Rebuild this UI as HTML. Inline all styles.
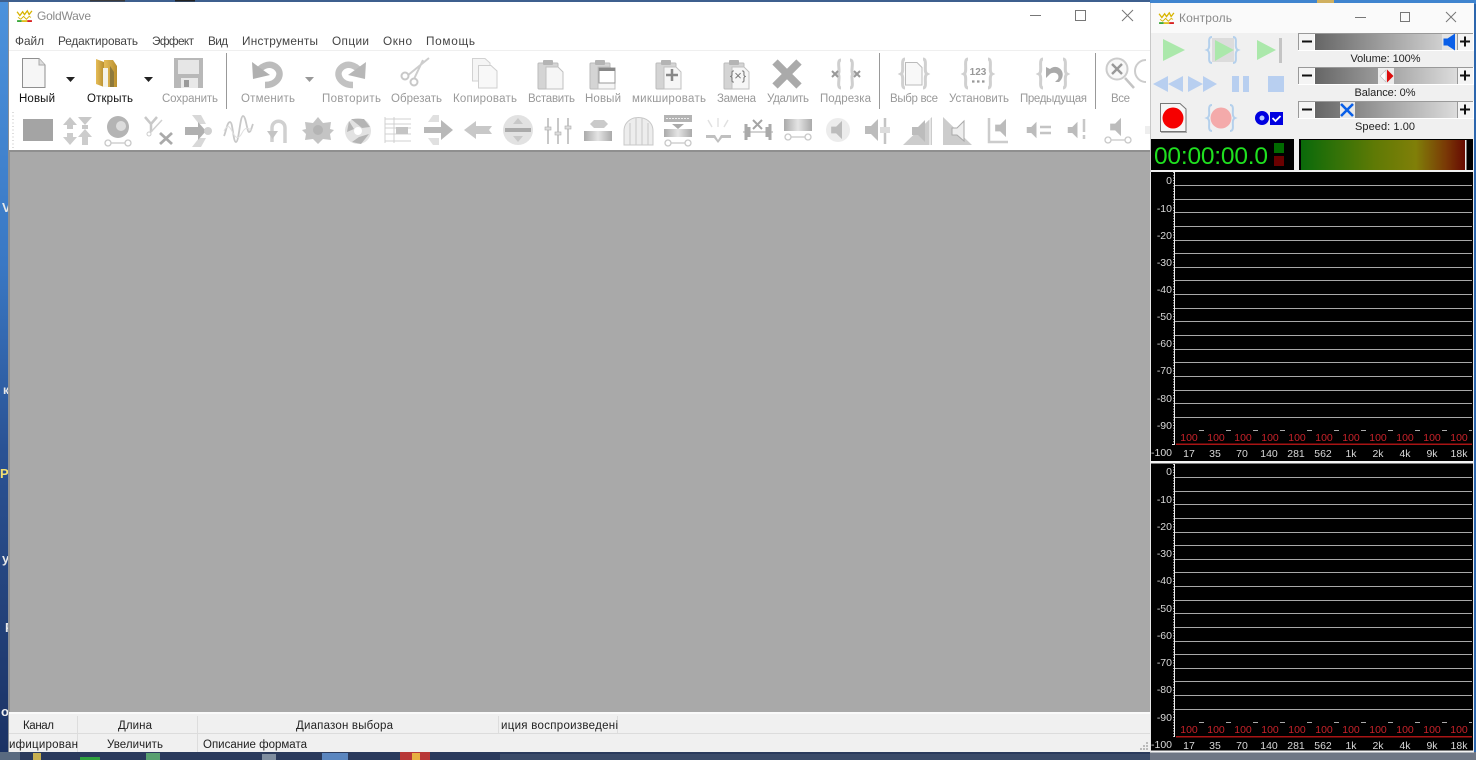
<!DOCTYPE html>
<html><head><meta charset="utf-8"><title>GoldWave</title>
<style>
html,body{margin:0;padding:0;background:#24375f;overflow:hidden}
svg{display:block;position:absolute;left:0;top:0}
text{font-family:"Liberation Sans",sans-serif;font-size:11px}
.m{fill:#444;font-size:11.8px}
.l{fill:#999;font-size:11.5px}
.b{fill:#111;font-size:11.5px}
.s{fill:#222;font-size:11.5px}
.a{fill:#d8d8d8;font-size:10.5px;text-anchor:end}
.f{fill:#d8d8d8;font-size:10.5px;text-anchor:middle}
.r{fill:#c8222a;font-size:10.5px;text-anchor:middle}
.c{fill:#222;font-size:10.5px;text-anchor:middle}
</style></head><body>
<svg width="1476" height="760" viewBox="0 0 1476 760" xmlns="http://www.w3.org/2000/svg">
<defs>
<linearGradient id="dk" x1="0" y1="0" x2="0" y2="1"><stop offset="0" stop-color="#4c92dc"/><stop offset=".35" stop-color="#3a78c4"/><stop offset=".6" stop-color="#2a5294"/><stop offset=".8" stop-color="#24437c"/><stop offset="1" stop-color="#1b3264"/></linearGradient>
<linearGradient id="tr" x1="0" y1="0" x2="1" y2="0"><stop offset="0" stop-color="#666"/><stop offset="1" stop-color="#dcdcdc"/></linearGradient>
<linearGradient id="lv" x1="0" y1="0" x2="1" y2="0"><stop offset="0" stop-color="#0a6a0a"/><stop offset=".45" stop-color="#5f7a05"/><stop offset=".7" stop-color="#807f08"/><stop offset=".88" stop-color="#7a3a06"/><stop offset="1" stop-color="#660a02"/></linearGradient>
<linearGradient id="bar" x1="0" y1="0" x2="1" y2="0"><stop offset="0" stop-color="#aaa"/><stop offset=".5" stop-color="#e4e4e4"/><stop offset="1" stop-color="#aaa"/></linearGradient>
<linearGradient id="fold" x1="0" y1="0" x2="1" y2="0"><stop offset="0" stop-color="#e6bd58"/><stop offset="1" stop-color="#b98f2e"/></linearGradient>
<symbol id="lg" viewBox="0 0 18 14" overflow="visible"><path d="M1 3 L4 7 L7 3 L9 6 L12 2 L14 6 L17 2" fill="none" stroke="#d8b400" stroke-width="1.4"/><path d="M2 9 L5 11 L8 8 L11 11 L14 8 L16 9" fill="none" stroke="#d8b400" stroke-width="1"/><rect x="1" y="12" width="5" height="2" fill="#3aa83a"/><rect x="6" y="12" width="6" height="2" fill="#e0c020"/><rect x="12" y="12" width="5" height="2" fill="#d82020"/></symbol>
<symbol id="clip" viewBox="-15 -16 30 32" overflow="visible"><rect x="-13" y="-11" width="20" height="26" rx="1" fill="#d4d4d4" stroke="#bbb"/><rect x="-8" y="-14" width="10" height="5" rx="1" fill="#b4b4b4"/><path d="M-5 -7 H7 L12 -2 V15 H-5Z" fill="#f6f6f6" stroke="#c0c0c0"/></symbol>
<symbol id="spk" viewBox="-8 -12 16 24" overflow="visible"><path d="M-7 -4 H-1 L6 -11 V11 L-1 4 H-7Z" fill="#bcbcbc"/></symbol>
<symbol id="wr" viewBox="-14 -4 28 8" overflow="visible"><circle cx="-10" cy="0" r="3" fill="#fff" stroke="#c8c8c8" stroke-width="1.3"/><circle cx="10" cy="0" r="3" fill="#fff" stroke="#c8c8c8" stroke-width="1.3"/><path d="M-7 0H7" stroke="#c8c8c8" stroke-width="1.3"/></symbol>
</defs>

<!-- desktop -->
<rect width="1476" height="760" fill="#24375f"/>
<rect x="0" y="0" width="9" height="752" fill="url(#dk)"/>
<rect x="0" y="0" width="1476" height="2" fill="#3d5f8e"/>
<rect x="90" y="0" width="35" height="1.5" fill="#3a3a3a"/><rect x="175" y="0" width="20" height="1.5" fill="#222"/>
<rect x="1473" y="0" width="3" height="752" fill="#2c66ad"/>
<rect x="1150" y="0" width="326" height="4" fill="#3f84cf"/>
<rect x="1317" y="0" width="17" height="3" fill="#d0b060"/>
<rect x="0" y="752" width="1476" height="8" fill="#2a3a5c"/>
<rect x="0" y="752" width="20" height="8" fill="#596a80"/>
<rect x="33" y="753" width="8" height="7" fill="#c8b050"/>
<rect x="80" y="757" width="20" height="3" fill="#2fa03f"/>
<rect x="146" y="753" width="14" height="7" fill="#58a070"/>
<rect x="262" y="754" width="14" height="6" fill="#7f8ea0"/>
<rect x="322" y="753" width="26" height="7" fill="#5a86c0"/>
<rect x="400" y="752" width="30" height="8" fill="#b83838"/><rect x="412" y="753" width="8" height="7" fill="#e8b040"/>
<rect x="500" y="754" width="650" height="6" fill="#3a4a68"/>
<rect x="1150" y="752" width="326" height="8" fill="#6f7785"/>
<text x="2" y="212" fill="#e8e8e8" style="font-size:13px;font-weight:bold">V</text>
<text x="3" y="394" fill="#e8e8e8" style="font-size:12px;font-weight:bold">к</text>
<text x="0" y="478" fill="#f4e070" style="font-size:13px;font-weight:bold">Р</text>
<text x="2" y="563" fill="#e8e8e8" style="font-size:13px;font-weight:bold">у</text>
<text x="5" y="632" fill="#e8e8e8" style="font-size:13px;font-weight:bold">Р</text>
<text x="1" y="716" fill="#f0f0f0" style="font-size:13px;font-weight:bold">о</text>

<!-- main window -->
<rect x="8" y="2" width="1142" height="750" fill="#fff"/>
<rect x="8" y="2" width="1" height="750" fill="#8a8f96"/>
<use href="#lg" x="16" y="9" width="17" height="13"/>
<text x="37" y="20" fill="#8a8a8a" style="font-size:12px" textLength="54">GoldWave</text>
<rect x="1030" y="15" width="11" height="1" fill="#777"/>
<rect x="1075.5" y="10.5" width="10" height="10" fill="none" stroke="#777"/>
<path d="M1122 10 L1133 21 M1133 10 L1122 21" stroke="#777" fill="none"/>

<text class="m" x="15" y="45" textLength="29">Файл</text>
<text class="m" x="58" y="45" textLength="80">Редактировать</text>
<text class="m" x="152" y="45" textLength="42">Эффект</text>
<text class="m" x="208" y="45" textLength="20">Вид</text>
<text class="m" x="242" y="45" textLength="76">Инструменты</text>
<text class="m" x="332" y="45" textLength="37">Опции</text>
<text class="m" x="383" y="45" textLength="29">Окно</text>
<text class="m" x="426" y="45" textLength="49">Помощь</text>
<rect x="9" y="50" width="1141" height="1" fill="#efefef"/>

<!-- separators -->
<rect x="226" y="53" width="1" height="56" fill="#999"/>
<rect x="879" y="53" width="1" height="56" fill="#999"/>
<rect x="1095" y="53" width="1" height="56" fill="#999"/>

<!-- big toolbar icons -->
<path d="M22.5 58.5 H39 L45 65 V87.5 H22.5Z" fill="#f6f6f6" stroke="#8f8f8f"/><path d="M39 58.5V65H45" fill="#ddd" stroke="#aaa"/>
<path d="M66 77h9l-4.500 5z" fill="#222"/>
<path d="M96 59 L104 62 V87 L96 84Z" fill="url(#fold)"/><path d="M104 60 H113 L117 66 V87 H104Z" fill="url(#fold)"/><path d="M103 68 H108 V87 H103Z" fill="#f4f2e8"/><path d="M110 66 L114 72 V87 H110Z" fill="#8f7a3c"/>
<path d="M144 77h9l-4.500 5z" fill="#222"/>
<path d="M174 58 H203 V88 H174Z" fill="#b8b8b8"/><rect x="178" y="60" width="21" height="14" fill="#e6e6e6"/><rect x="181" y="78" width="17" height="10" fill="#e8e8e8"/><rect x="184" y="80" width="5" height="7" fill="#9a9a9a"/>
<path d="M265 85 C278 85 283 74 277 68 C271 62 263 65 258 71" fill="none" stroke="#bcbcbc" stroke-width="6.500"/><path d="M252 62 L253 79 L270 75Z" fill="#b0b0b0"/>
<path d="M305 77h9l-4.500 5z" fill="#999"/>
<g transform="translate(618,0) scale(-1,1)" opacity=".9"><path d="M265 85 C278 85 283 74 277 68 C271 62 263 65 258 71" fill="none" stroke="#bcbcbc" stroke-width="6.500"/><path d="M252 62 L253 79 L270 75Z" fill="#b0b0b0"/></g>
<path d="M429 58 L407 76 M423 60 L414 79" stroke="#cdcdcd" stroke-width="2" fill="none"/><circle cx="405" cy="76" r="3.500" fill="#fff" stroke="#c8c8c8" stroke-width="2"/><circle cx="414" cy="82" r="3.500" fill="#fff" stroke="#c8c8c8" stroke-width="2"/>
<path d="M472.500 58.500H485L490 63V81H472.500Z" fill="#f5f5f5" stroke="#d2d2d2"/><path d="M478.500 65.500H491L497 71V88H478.500Z" fill="#f8f8f8" stroke="#cfcfcf"/>
<use href="#clip" x="536" y="58" width="30" height="32"/>
<use href="#clip" x="588" y="58" width="30" height="32"/><rect x="599" y="68" width="16" height="15" fill="#fff" stroke="#999"/><rect x="599" y="68" width="16" height="3" fill="#888"/>
<use href="#clip" x="654" y="58" width="30" height="32"/><path d="M672 69v12M666 75h12" stroke="#888" stroke-width="2.500"/>
<use href="#clip" x="722" y="58" width="30" height="32"/><text x="738" y="80" fill="#777" style="font-size:13px" text-anchor="middle">{×}</text>
<path d="M775 62 L799 86 M799 62 L775 86" stroke="#aaa" stroke-width="7.500" fill="none"/>
<path d="M841 60 C836 60 841 72 838 74 C841 76 836 88 841 88 M850 60 C855 60 850 72 853 74 C850 76 855 88 850 88" fill="none" stroke="#cfcfcf" stroke-width="3"/><path d="M832 71l6 6m0-6l-6 6M854 71l6 6m0-6l-6 6" stroke="#999" stroke-width="2"/>
<path d="M905 59 C900 59 905 72 901 74 C905 76 900 88 905 88 M923 59 C928 59 923 72 927 74 C923 76 928 88 923 88" fill="none" stroke="#d0d0d0" stroke-width="3"/><path d="M905.500 62.500H917L922 67.500V85H905.500Z" fill="#f8f8f8" stroke="#bbb"/>
<path d="M968 59 C963 59 968 72 964 74 C968 76 963 88 968 88 M988 59 C993 59 988 72 992 74 C988 76 993 88 988 88" fill="none" stroke="#d0d0d0" stroke-width="3"/><text x="978" y="75" fill="#999" text-anchor="middle" style="font-size:10px;font-weight:bold">123</text><path d="M972 81.500h2.500M977 81.500h2.500M982 81.500h2.500" stroke="#999" stroke-width="2.200"/>
<path d="M1043 59 C1038 59 1043 72 1039 74 C1043 76 1038 88 1043 88 M1063 59 C1068 59 1063 72 1067 74 C1063 76 1068 88 1063 88" fill="none" stroke="#d0d0d0" stroke-width="3"/><path d="M1046 67V78L1050 74C1055 71 1060 74 1058 79L1055 82H1059C1064 78 1064 71 1059 68C1056 66 1052 67 1050 69Z" fill="#aaa"/>
<circle cx="1117" cy="69" r="10.500" fill="#f8f8f8" stroke="#ccc" stroke-width="2"/><path d="M1112 64l10 10m0-10l-10 10" stroke="#999" stroke-width="2.400"/><path d="M1125 78l9 10" stroke="#c4c4c4" stroke-width="2.500"/>
<path d="M1146 60a11 11 0 0 0 0 22" fill="none" stroke="#ccc" stroke-width="2"/>

<!-- big labels -->
<text class="b" x="19" y="102" textLength="36">Новый</text>
<text class="b" x="87" y="102" textLength="46">Открыть</text>
<text class="l" x="162" y="102" textLength="56">Сохранить</text>
<text class="l" x="241" y="102" textLength="54">Отменить</text>
<text class="l" x="322" y="102" textLength="59">Повторить</text>
<text class="l" x="391" y="102" textLength="51">Обрезать</text>
<text class="l" x="453" y="102" textLength="64">Копировать</text>
<text class="l" x="528" y="102" textLength="47">Вставить</text>
<text class="l" x="585" y="102" textLength="36">Новый</text>
<text class="l" x="632" y="102" textLength="74">микшировать</text>
<text class="l" x="717" y="102" textLength="39">Замена</text>
<text class="l" x="767" y="102" textLength="42">Удалить</text>
<text class="l" x="820" y="102" textLength="51">Подрезка</text>
<text class="l" x="890" y="102" textLength="48">Выбр все</text>
<text class="l" x="949" y="102" textLength="60">Установить</text>
<text class="l" x="1020" y="102" textLength="67">Предыдущая</text>
<text class="l" x="1111" y="102" textLength="19">Все</text>

<!-- toolbar 2 -->
<path d="M13 112V150" stroke="#bbb" stroke-dasharray="1 2.500"/>
<rect x="23" y="119" width="30" height="22" fill="#a4a4a4"/>
<path d="M63 125l7-8 7 8h-4v4h-6v-4zM78 117h14l-7 8z M82 125h6v4h-6z" fill="#c8c8c8"/><path d="M63 137h14l-7 8zM67 133h6v4h-6zM78 137l7-8 7 8h-4v8h-6v-8z" fill="#cccccc"/>
<circle cx="118" cy="127" r="11" fill="#b4b4b4"/><circle cx="121" cy="126" r="5" fill="#dcdcdc"/><use href="#wr" x="104" y="139" width="28" height="8"/>
<path d="M145 117l6 7 6-7M151 124v8" stroke="#c8c8c8" stroke-width="2.500" fill="none"/><path d="M150 133l12-13" stroke="#d0d0d0" stroke-width="1.500"/><circle cx="149" cy="134" r="2" fill="#fff" stroke="#ccc"/><path d="M160 133l12 11m0-11l-12 11" stroke="#aaa" stroke-width="2.800"/>
<path d="M192 115h9l5 9h-7zM192 147h9l5-9h-7z" fill="#d8d8d8"/><path d="M185 127h13v-5l8 9-8 9v-5h-13z" fill="#b0b0b0"/><circle cx="208" cy="131" r="4" fill="#d0d0d0"/>
<path d="M224 136c2-4 3-14 6-14s3 20 6 20 4-26 7-26 4 16 6 16 3-6 4-8" fill="none" stroke="#c8c8c8" stroke-width="1.800"/><path d="M224 131c4-8 6-4 9 2s6 6 9 0 6-6 10-2" fill="none" stroke="#e0e0e0"/>
<path d="M272 142v-14c0-9 13-9 13 0v15" fill="none" stroke="#d0d0d0" stroke-width="3.500"/><path d="M267 131h11l-5.500 8z" fill="#c4c4c4"/>
<path d="M318 117l5 6 8-1-1 7 4 1-4 4 1 6-8-1-5 5-5-5-8 1 1-6-4-4 4-1-1-7 8 1z" fill="#c4c4c4"/><circle cx="318" cy="130" r="5" fill="#b4b4b4"/>
<circle cx="358" cy="131" r="13" fill="#e2e2e2"/><path d="M351 119l13 0 6 8-8 1zM369 134l-8 10-9-2 7-5zM347 132l2-11 5 8z" fill="#b4b4b4"/><circle cx="358" cy="131" r="4" fill="#fff"/>
<path d="M385 119h26M385 124h26M385 128h26M385 134h26M385 141h26M385 117v26M394 117v26" fill="none" stroke="#d0d0d0"/><path d="M396 127h12v7h-12z" fill="#c4c4c4"/>
<path d="M428 122l5-7 6 0 0 7zM428 138l5 7 6 0 0-7z" fill="#e0e0e0"/><path d="M424 127h17v-7l12 10-12 10v-7h-17z" fill="#b8b8b8"/>
<path d="M464 130l12-9v5h16l-3 4 3 4h-16v5z" fill="#c8c8c8"/>
<circle cx="518" cy="130" r="15" fill="#e2e2e2"/><rect x="505" y="128" width="26" height="4" fill="#aaa"/><path d="M513 124l5-6 5 6zM513 136l5 6 5-6z" fill="#c8c8c8"/>
<path d="M548 118v26M558 118v26M568 118v26" stroke="#bbb" stroke-width="1.600"/><rect x="545" y="127" width="6" height="3" fill="#ddd" stroke="#aaa" stroke-width=".6"/><rect x="555" y="132" width="6" height="3" fill="#ddd" stroke="#aaa" stroke-width=".6"/><rect x="565" y="126" width="6" height="3" fill="#ddd" stroke="#aaa" stroke-width=".6"/>
<path d="M590 124l4-4h10l4 4-4 4h-10z" fill="#cacaca"/><rect x="584" y="131" width="28" height="10" fill="url(#bar)"/>
<path d="M624 145v-14c0-18 29-18 29 0v14z" fill="#ededed" stroke="#c8c8c8"/><path d="M630 145v-22M636 145v-27M642 145v-27M648 145v-22" stroke="#c8c8c8"/>
<rect x="664" y="115" width="28" height="7" fill="#b4b4b4"/><path d="M666 118.500h24" stroke="#eee" stroke-dasharray="2 1"/><path d="M672 124h12l-6 5z" fill="#aaa"/><rect x="664" y="129" width="28" height="8" fill="url(#bar)"/><use href="#wr" x="664" y="139" width="28" height="8"/>
<path d="M706 135h9l3 5 3-5h10v3h-9l-4 5-4-5h-8z" fill="#c0c0c0"/><path d="M718 118v9M708 120l4 7M728 120l-4 7" stroke="#e0e0e0" stroke-width="1.400"/>
<path d="M743 132h30" stroke="#c4c4c4" stroke-width="1.500"/><path d="M746 124v16M749 127v10M770 124v16M767 127v10" stroke="#aaa" stroke-width="3"/><path d="M753 120l9 9m0-9l-9 9" stroke="#a4a4a4" stroke-width="2"/>
<rect x="784" y="119" width="28" height="12" fill="url(#bar)"/><use href="#wr" x="784" y="133" width="28" height="8"/>
<circle cx="838" cy="130" r="12" fill="#ececec"/><use href="#spk" x="829" y="120" width="16" height="20"/>
<use href="#spk" x="864" y="118" width="16" height="24"/><path d="M885 118v26" stroke="#c4c4c4" stroke-width="2.500"/><rect x="880" y="127" width="10" height="6" fill="#ddd"/>
<path d="M903 145L932 117V145z" fill="#cccccc"/><use href="#spk" x="911" y="119" width="16" height="24"/><path d="M930 118v27" stroke="#fff"/>
<path d="M943 117L972 145H943z" fill="#cccccc"/><path d="M952 128h5l7-7v20l-7-6h-5z" fill="#eee" stroke="#aaa"/>
<path d="M989 118v24h19" fill="none" stroke="#cccccc" stroke-width="2.500"/><use href="#spk" x="994" y="118" width="14" height="20"/>
<use href="#spk" x="1025" y="121" width="14" height="18"/><path d="M1040 127h11M1040 133h11" stroke="#c4c4c4" stroke-width="2.500"/>
<use href="#spk" x="1066" y="121" width="14" height="18"/><path d="M1084 119v13M1084 135v4" stroke="#c8c8c8" stroke-width="2.500"/>
<use href="#spk" x="1108" y="117" width="16" height="20"/><use href="#wr" x="1104" y="136" width="28" height="8"/>
<rect x="1145" y="126" width="5" height="8" fill="#eee"/>

<!-- client -->
<rect x="9" y="150" width="1141" height="2" fill="#8f8f8f"/>
<rect x="9" y="152" width="1141" height="560" fill="#a9a9a9"/>
<rect x="9" y="152" width="1" height="560" fill="#8f8f8f"/>

<!-- status -->
<rect x="9" y="712" width="1141" height="40" fill="#f0f0f0"/>
<rect x="9" y="712" width="1141" height="2" fill="#fafafa"/>
<rect x="9" y="733" width="1141" height="1" fill="#dcdcdc"/>
<path d="M77.500 716V733M197.500 716V733M498.500 716V733M617.500 716V733M77.500 734V752M197.500 734V752" stroke="#ddd"/>
<path d="M1146 743h2M1143 746h2M1146 746h2M1140 749h2M1143 749h2M1146 749h2" stroke="#bbb" stroke-width="2"/>
<text class="s" x="23" y="729" textLength="31">Канал</text>
<text class="s" x="118" y="729" textLength="34">Длина</text>
<text class="s" x="296" y="729" textLength="97">Диапазон выбора</text>
<text class="s" x="501" y="729" textLength="117">иция воспроизведені</text>
<text class="s" x="9" y="748" textLength="69">ифицирован</text>
<text class="s" x="107" y="748" textLength="56">Увеличить</text>
<text class="s" x="203" y="748" textLength="104">Описание формата</text>

<!-- control window -->
<rect x="1150" y="3" width="324" height="749" fill="#f0f0f0"/>
<rect x="1150" y="3" width="324" height="30" fill="#fafafa"/>
<rect x="1150" y="3" width="1" height="749" fill="#c8c8c8"/>
<use href="#lg" x="1158" y="11" width="17" height="13"/>
<text x="1179" y="22" fill="#8a8a8a" style="font-size:12px" textLength="53">Контроль</text>
<rect x="1355" y="17" width="11" height="1" fill="#777"/>
<rect x="1400.500" y="12.500" width="9" height="9" fill="none" stroke="#777"/>
<path d="M1446 12l10 10m0-10l-10 10" stroke="#777" fill="none"/>

<!-- transport -->
<path d="M1163 39L1185 50L1163 61Z" fill="#abe8ab"/>
<rect x="1212" y="38" width="22" height="24" fill="#dcdcdc"/><path d="M1215 40L1234 50L1215 61Z" fill="#abe8ab"/>
<path d="M1212 37C1206 37 1212 48 1207 50C1212 52 1206 63 1212 63M1233 37C1239 37 1233 48 1238 50C1233 52 1239 63 1233 63" fill="none" stroke="#b4d0ec" stroke-width="2"/>
<path d="M1257 40L1276 50L1257 60Z" fill="#abe8ab"/><rect x="1279" y="38" width="3" height="25" fill="#c4c4c4"/>
<path d="M1153 84L1168 76V92ZM1168 84L1183 76V92Z" fill="#b8cff0"/>
<path d="M1188 76L1203 84L1188 92ZM1203 76L1217 84L1203 92Z" fill="#b8cff0"/>
<rect x="1232" y="76" width="7" height="16" fill="#b8cff0"/><rect x="1243" y="76" width="6" height="16" fill="#b8cff0"/>
<rect x="1268" y="76" width="16" height="16" fill="#b8cff0"/>
<path d="M1160.500 103.500H1180L1186 109V131.500H1160.500Z" fill="#f6f6f6" stroke="#777"/><path d="M1161 132.500h26" stroke="#aaa"/>
<circle cx="1173" cy="118" r="10.500" fill="#f60000"/>
<circle cx="1221" cy="118" r="10.500" fill="#f4aaaa"/>
<path d="M1212 105C1206 105 1212 116 1207 118C1212 120 1206 131 1212 131M1230 105C1236 105 1230 116 1235 118C1230 120 1236 131 1230 131" fill="none" stroke="#b4d0ec" stroke-width="2"/>
<circle cx="1262" cy="118" r="7" fill="#0000e0"/><circle cx="1262" cy="118" r="2.500" fill="#b8c8ff"/>
<rect x="1270" y="112" width="13" height="13" fill="#0000e0"/><path d="M1272.500 118l3 3 5-5" fill="none" stroke="#fff" stroke-width="1.800"/>

<!-- sliders -->
<g><rect x="1298" y="33" width="176" height="18" fill="#fff"/><rect x="1298" y="33" width="175" height="1" fill="#999"/><rect x="1298" y="33" width="1" height="17" fill="#999"/><rect x="1299" y="34" width="15" height="16" fill="#f4f4f4"/><rect x="1458" y="34" width="15" height="16" fill="#f4f4f4"/><rect x="1457" y="33" width="1" height="17" fill="#999"/><rect x="1315" y="34" width="142" height="16" fill="url(#tr)"/><path d="M1302 41.500h10" stroke="#111" stroke-width="2"/><path d="M1460 41.500h10M1465 36.500v10" stroke="#111" stroke-width="2"/></g>
<g><rect x="1298" y="67" width="176" height="18" fill="#fff"/><rect x="1298" y="67" width="175" height="1" fill="#999"/><rect x="1298" y="67" width="1" height="17" fill="#999"/><rect x="1299" y="68" width="15" height="16" fill="#f4f4f4"/><rect x="1458" y="68" width="15" height="16" fill="#f4f4f4"/><rect x="1457" y="67" width="1" height="17" fill="#999"/><rect x="1315" y="68" width="142" height="16" fill="url(#tr)"/><path d="M1302 75.500h10" stroke="#111" stroke-width="2"/><path d="M1460 75.500h10M1465 70.500v10" stroke="#111" stroke-width="2"/></g>
<g><rect x="1298" y="101" width="176" height="18" fill="#fff"/><rect x="1298" y="101" width="175" height="1" fill="#999"/><rect x="1298" y="101" width="1" height="17" fill="#999"/><rect x="1299" y="102" width="15" height="16" fill="#f4f4f4"/><rect x="1458" y="102" width="15" height="16" fill="#f4f4f4"/><rect x="1457" y="101" width="1" height="17" fill="#999"/><rect x="1315" y="102" width="142" height="16" fill="url(#tr)"/><path d="M1302 109.500h10" stroke="#111" stroke-width="2"/><path d="M1460 109.500h10M1465 104.500v10" stroke="#111" stroke-width="2"/></g>
<rect x="1442" y="34" width="15" height="16" fill="#e4e4e4"/><path d="M1443.500 38.500h4l7.500-5v17l-7.500-5h-4z" fill="#0a5fe8"/>
<rect x="1378" y="68" width="16" height="16" fill="#ececec"/><path d="M1386 70L1380 76L1386 82Z" fill="#fff" stroke="#bbb" stroke-width=".6"/><path d="M1387 69.500L1393.500 76L1387 82.500Z" fill="#dd0c0c"/>
<rect x="1340" y="102" width="15" height="16" fill="#e8e8e8"/><path d="M1341 104l12 12m0-12l-12 12" stroke="#0a5fe8" stroke-width="2.600"/>
<text class="c" x="1385.500" y="62" textLength="70" style="font-size:11px">Volume: 100%</text>
<text class="c" x="1385" y="96" textLength="61" style="font-size:11px">Balance: 0%</text>
<text class="c" x="1385" y="130" textLength="60" style="font-size:11px">Speed: 1.00</text>

<!-- time -->
<rect x="1151" y="139" width="143" height="31" fill="#000"/>
<text x="1154" y="164" fill="#1fe01f" style="font-size:24.500px" textLength="114">00:00:00.0</text>
<rect x="1274" y="143" width="10" height="10" fill="#006a00"/><rect x="1274" y="156" width="10" height="10" fill="#6a0000"/>
<rect x="1299" y="139" width="174" height="31" fill="#000"/>
<rect x="1301" y="140" width="164" height="30" fill="url(#lv)"/><rect x="1465" y="140" width="1.500" height="30" fill="#eee"/>
<rect x="1151" y="170" width="322" height="2" fill="#f0f0f0"/>

<!-- spectrum 1 -->
<rect x="1151" y="172" width="322" height="289" fill="#000"/>
<path stroke="#a8a8a8" d="M1175 185.500h297M1175 199.500h297M1175 212.500h297M1175 226.500h297M1175 240.500h297M1175 253.500h297M1175 267.500h297M1175 280.500h297M1175 294.500h297M1175 308.500h297M1175 321.500h297M1175 335.500h297M1175 349.500h297M1175 362.500h297M1175 376.500h297M1175 390.500h297M1175 403.500h297M1175 417.500h297"/>
<path d="M1199 430.500h5M1226 430.500h5M1253 430.500h5M1280 430.500h5M1307 430.500h5M1334 430.500h5M1361 430.500h5M1388 430.500h5M1415 430.500h5M1442 430.500h5M1469 430.500h3" stroke="#aaa"/>
<path d="M1174.500 172V445" stroke="#eee"/>
<path d="M1173.500 172V445" stroke="#bbb" stroke-dasharray="1 1.720"/>
<path d="M1172 444.500H1175" stroke="#eee"/>
<rect x="1176" y="443.500" width="296" height="1.500" fill="#a81414"/>
<g>
<text class="a" x="1172" y="184">0</text><text class="a" x="1172" y="212">-10</text><text class="a" x="1172" y="239">-20</text><text class="a" x="1172" y="266">-30</text><text class="a" x="1172" y="293">-40</text><text class="a" x="1172" y="320">-50</text><text class="a" x="1172" y="347">-60</text><text class="a" x="1172" y="374">-70</text><text class="a" x="1172" y="402">-80</text><text class="a" x="1172" y="429">-90</text><text class="a" x="1172" y="456">-100</text>
<text class="r" x="1189" y="441">100</text><text class="r" x="1216" y="441">100</text><text class="r" x="1243" y="441">100</text><text class="r" x="1270" y="441">100</text><text class="r" x="1297" y="441">100</text><text class="r" x="1324" y="441">100</text><text class="r" x="1351" y="441">100</text><text class="r" x="1378" y="441">100</text><text class="r" x="1405" y="441">100</text><text class="r" x="1432" y="441">100</text><text class="r" x="1459" y="441">100</text>
<text class="f" x="1189" y="457">17</text><text class="f" x="1215" y="457">35</text><text class="f" x="1242" y="457">70</text><text class="f" x="1269" y="457">140</text><text class="f" x="1296" y="457">281</text><text class="f" x="1323" y="457">562</text><text class="f" x="1351" y="457">1k</text><text class="f" x="1378" y="457">2k</text><text class="f" x="1405" y="457">4k</text><text class="f" x="1432" y="457">9k</text><text class="f" x="1459" y="457">18k</text>
</g>
<rect x="1150" y="461" width="324" height="2.500" fill="#f4f4f4"/>

<!-- spectrum 2 -->
<rect x="1151" y="463.500" width="322" height="287" fill="#000"/>
<path stroke="#a8a8a8" d="M1175 477.500h297M1175 491.500h297M1175 504.500h297M1175 518.500h297M1175 532.500h297M1175 545.500h297M1175 559.500h297M1175 572.500h297M1175 586.500h297M1175 600.500h297M1175 613.500h297M1175 627.500h297M1175 641.500h297M1175 654.500h297M1175 668.500h297M1175 681.500h297M1175 695.500h297M1175 709.500h297"/>
<path d="M1199 722.500h5M1226 722.500h5M1253 722.500h5M1280 722.500h5M1307 722.500h5M1334 722.500h5M1361 722.500h5M1388 722.500h5M1415 722.500h5M1442 722.500h5M1469 722.500h3" stroke="#aaa"/>
<path d="M1174.500 464V737" stroke="#eee"/>
<path d="M1173.500 464V737" stroke="#bbb" stroke-dasharray="1 1.720"/>
<rect x="1176" y="736" width="296" height="1.500" fill="#a81414"/>
<g>
<text class="a" x="1172" y="475">0</text><text class="a" x="1172" y="503">-10</text><text class="a" x="1172" y="530">-20</text><text class="a" x="1172" y="557">-30</text><text class="a" x="1172" y="584">-40</text><text class="a" x="1172" y="612">-50</text><text class="a" x="1172" y="639">-60</text><text class="a" x="1172" y="666">-70</text><text class="a" x="1172" y="693">-80</text><text class="a" x="1172" y="721">-90</text><text class="a" x="1172" y="748">-100</text>
<text class="r" x="1189" y="733">100</text><text class="r" x="1216" y="733">100</text><text class="r" x="1243" y="733">100</text><text class="r" x="1270" y="733">100</text><text class="r" x="1297" y="733">100</text><text class="r" x="1324" y="733">100</text><text class="r" x="1351" y="733">100</text><text class="r" x="1378" y="733">100</text><text class="r" x="1405" y="733">100</text><text class="r" x="1432" y="733">100</text><text class="r" x="1459" y="733">100</text>
<text class="f" x="1189" y="749">17</text><text class="f" x="1215" y="749">35</text><text class="f" x="1242" y="749">70</text><text class="f" x="1269" y="749">140</text><text class="f" x="1296" y="749">281</text><text class="f" x="1323" y="749">562</text><text class="f" x="1351" y="749">1k</text><text class="f" x="1378" y="749">2k</text><text class="f" x="1405" y="749">4k</text><text class="f" x="1432" y="749">9k</text><text class="f" x="1459" y="749">18k</text>
</g>
<rect x="1150" y="750.500" width="324" height="2" fill="#f4f4f4"/>
<rect x="1150" y="172" width="1" height="580" fill="#e8e8e8"/><rect x="1473" y="172" width="1" height="580" fill="#e8e8e8"/>
</svg>
</body></html>
